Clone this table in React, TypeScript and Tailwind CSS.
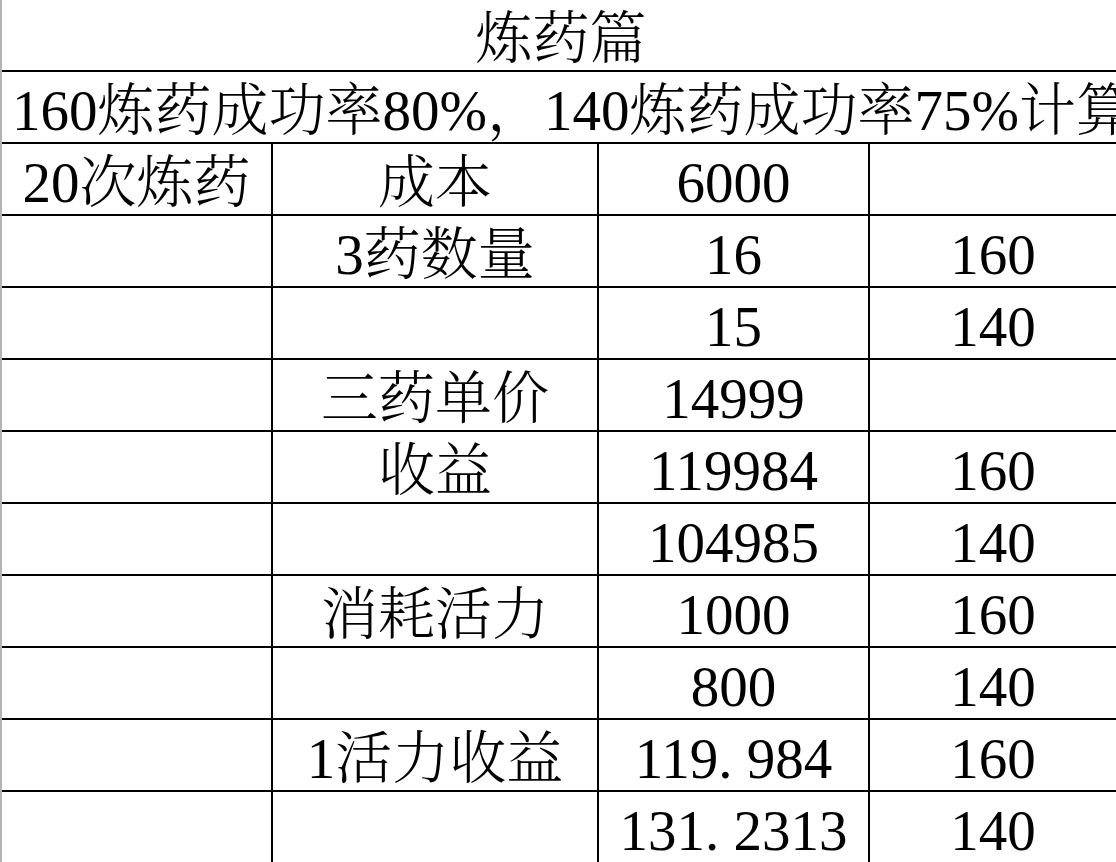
const rows: [string, string, string, string][] = [
  ["20次炼药", "成本", "6000", ""],
  ["", "3药数量", "16", "160"],
  ["", "", "15", "140"],
  ["", "三药单价", "14999", ""],
  ["", "收益", "119984", "160"],
  ["", "", "104985", "140"],
  ["", "消耗活力", "1000", "160"],
  ["", "", "800", "140"],
  ["", "1活力收益", "119.984", "160"],
  ["", "", "131.2313", "140"],
]

// 宋体 style: the dot takes a half-width cell, like the digits
function Cell({ text }: { text: string }) {
  if (!text.includes(".")) return <>{text}</>
  const [a, b] = text.split(".")
  return (
    <>
      {a}
      <span className="inline-block w-[0.5em] text-left">.</span>
      {b}
    </>
  )
}

export default function App() {
  return (
    <div className="w-[1116px] h-[862px] overflow-hidden bg-white border-l-2 border-[#b4b4b4] text-black font-['Liberation_Serif','Noto_Serif_CJK_SC','Noto_Sans_CJK_SC',serif] font-light text-[57px] leading-none">
      <div className="h-[72px] border-b-2 border-black flex items-center justify-center pt-[6px] pl-[4px]">
        炼药篇
      </div>
      <div className="h-[72px] border-b-2 border-black flex items-center pl-[10px] pt-[6px] whitespace-nowrap overflow-hidden">
        160炼药成功率80%，140炼药成功率75%计算
      </div>
      <div className="grid grid-cols-[271px_326px_271px_1fr]">
        {rows.map((r, i) => (
          <div key={i} className="contents">
            {r.map((c, j) => (
              <div
                key={j}
                className={
                  "h-[72px] border-b-2 border-black flex items-center justify-center pt-[6px] whitespace-nowrap " +
                  (j < 3 ? "border-r-2" : "")
                }
              >
                <Cell text={c} />
              </div>
            ))}
          </div>
        ))}
      </div>
    </div>
  )
}
